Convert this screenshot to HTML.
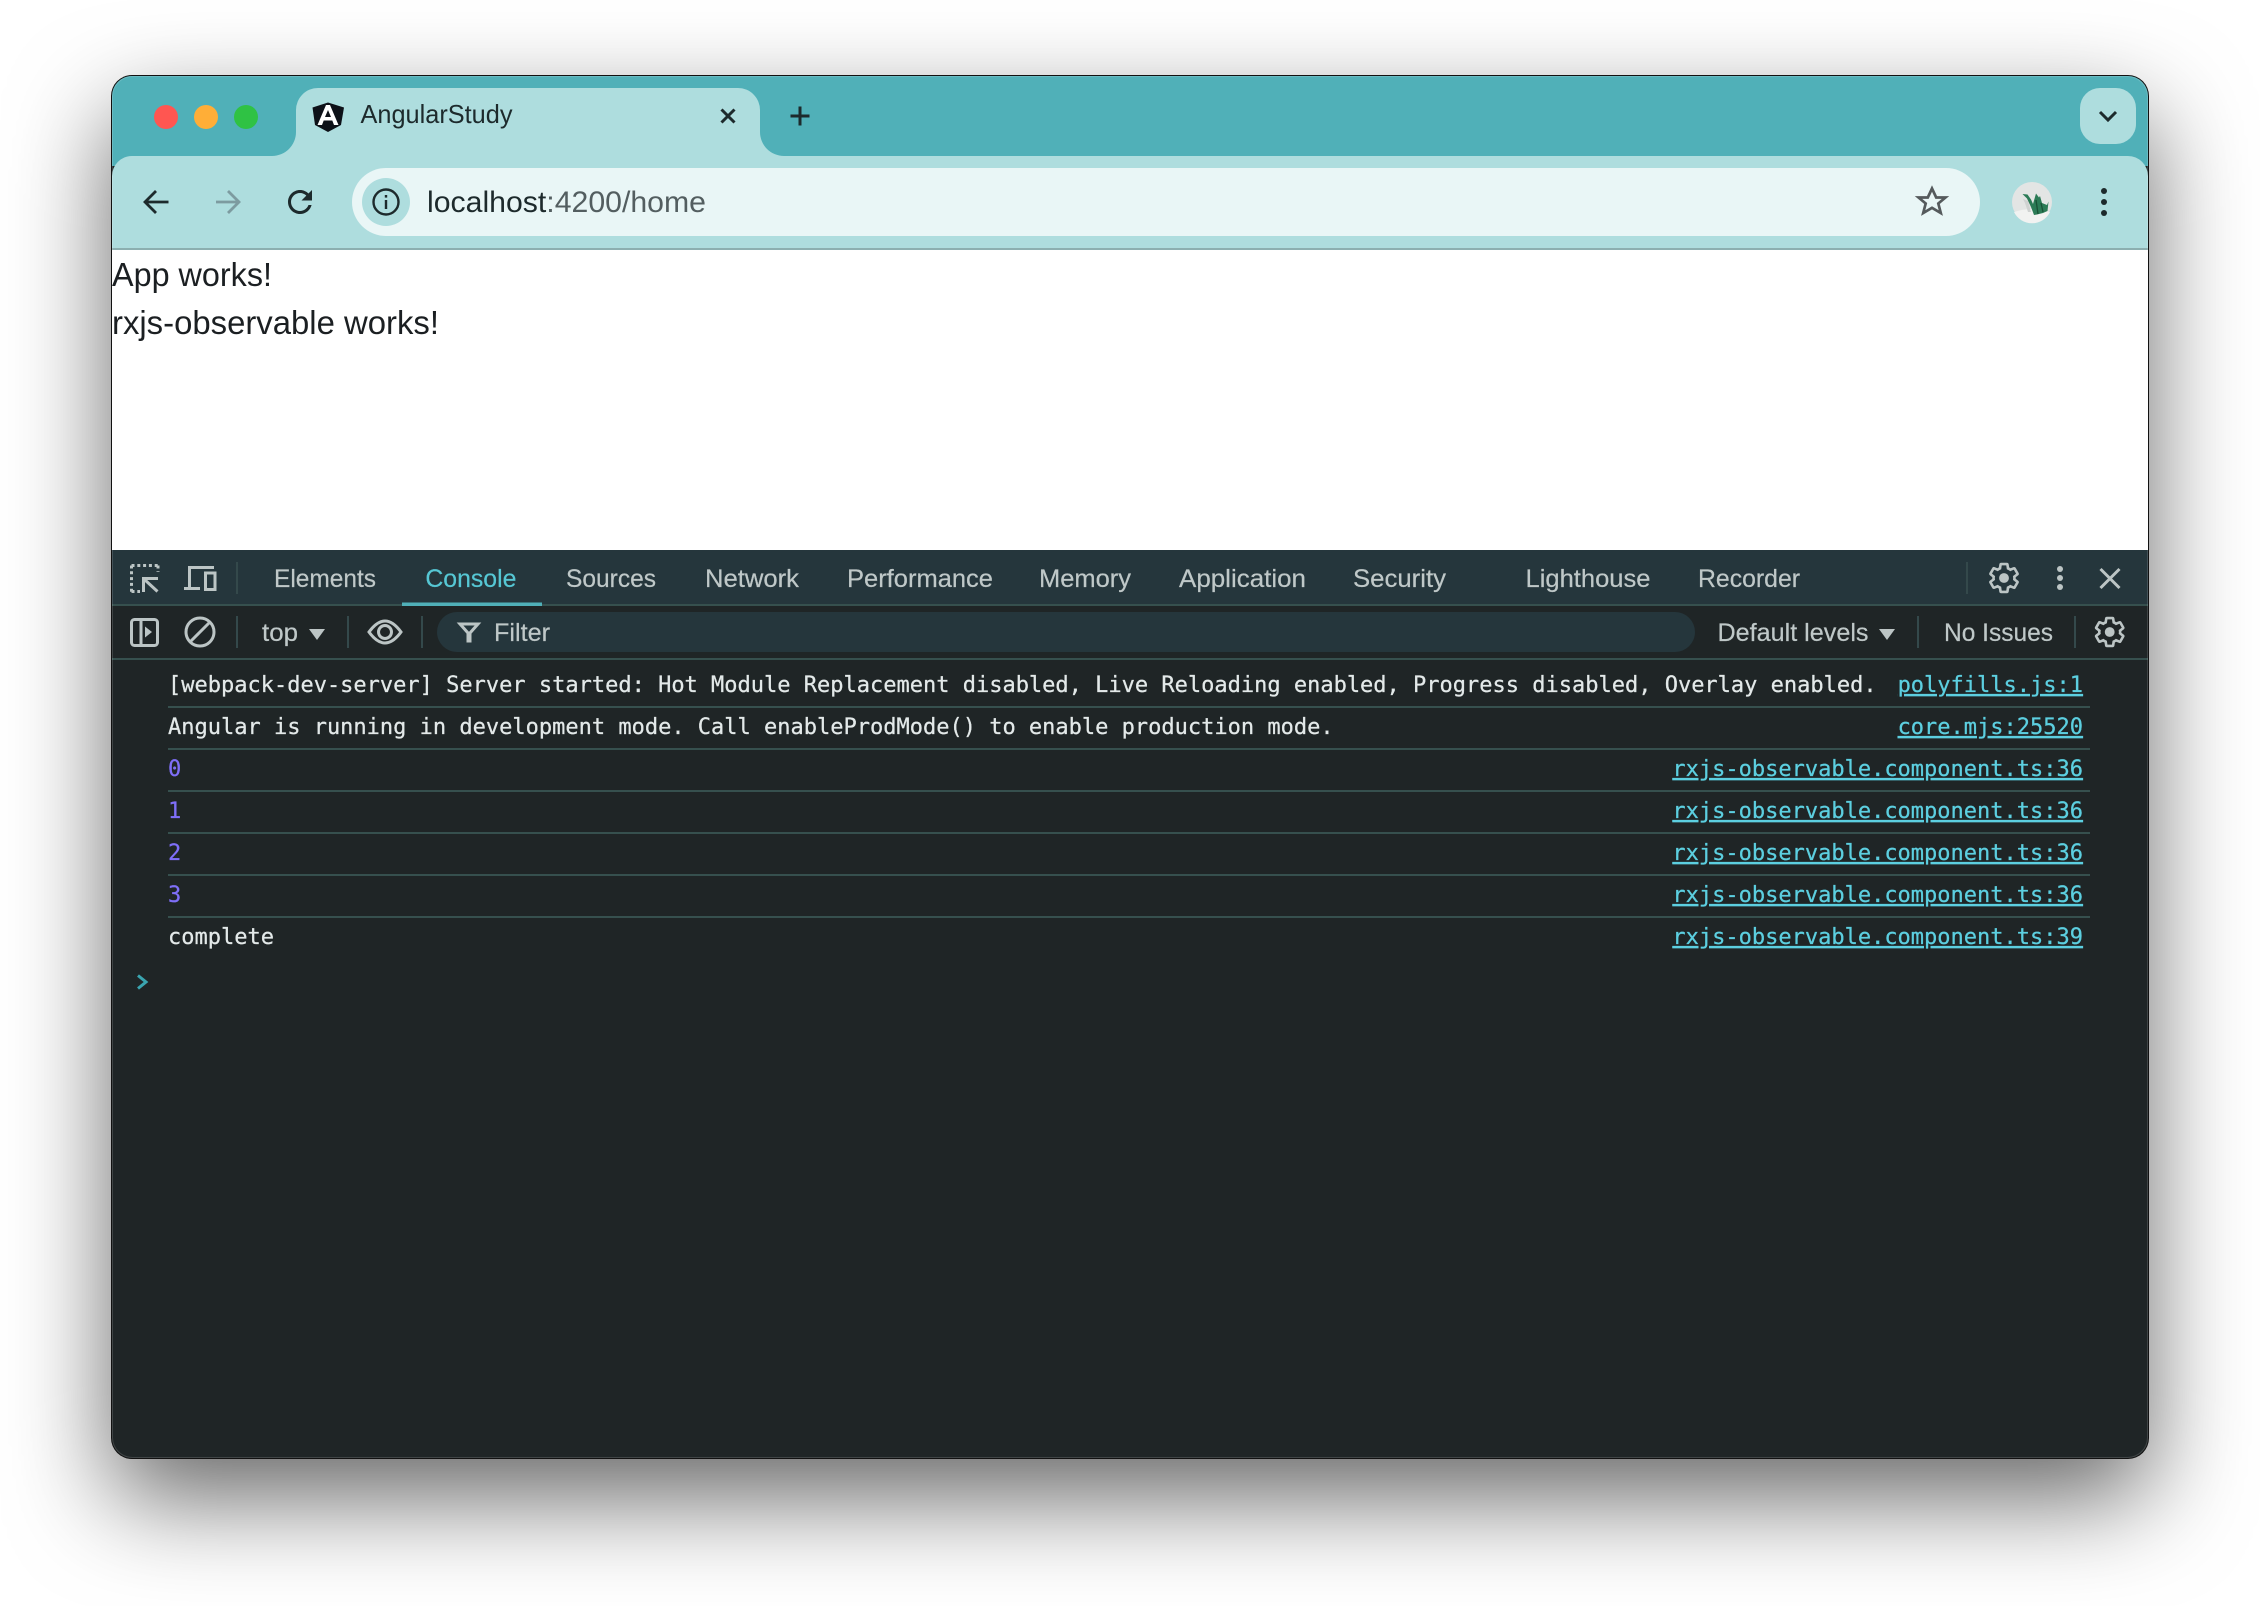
<!DOCTYPE html>
<html><head><meta charset="utf-8"><title>AngularStudy</title>
<style>
html,body{margin:0;padding:0;background:#fff;width:2260px;height:1606px;overflow:hidden}
#w{position:absolute;left:112px;top:76px;width:2036px;height:1382px;border-radius:20px;background:#1f2526;box-shadow:0 0 0 1px #111,0 40px 100px rgba(0,0,0,.6)}
svg{position:absolute;left:0;top:0}
.u{font-family:"Liberation Sans",sans-serif;font-size:25px;fill:#bfc8c8;stroke:#bfc8c8;stroke-width:.2}
.m{font-family:"DejaVu Sans Mono","Liberation Mono",monospace;font-size:22px;fill:#e3e9e9;stroke:#e3e9e9;stroke-width:.25}
.l{fill:#5ccfe0;stroke:#5ccfe0;text-decoration:underline;text-anchor:end}
.n{fill:#7f6ff8;stroke:#7f6ff8}
.ic{fill:none;stroke:#bcc5c5;stroke-width:3}
.sep{stroke:#34494b;stroke-width:2}
.row{fill:#36504e}
</style></head><body>
<div id="w"></div>
<svg width="2260" height="1606" viewBox="0 0 2260 1606" xmlns="http://www.w3.org/2000/svg">
<defs><clipPath id="c"><rect x="112" y="76" width="2036" height="1382" rx="20"/></clipPath></defs>
<g clip-path="url(#c)">
<!-- tab strip -->
<rect x="112" y="76" width="2036" height="90" fill="#50b0b8"/>
<!-- toolbar -->
<path d="M112 176A20 20 0 0 1 132 156H2128A20 20 0 0 1 2148 176V248H112Z" fill="#aeddde"/>
<rect x="112" y="248" width="2036" height="2" fill="#8cafb0"/>
<rect x="112" y="250" width="2036" height="300" fill="#fff"/>
<!-- tab -->
<path d="M272 156A24 24 0 0 0 296 132V110A22 22 0 0 1 318 88H738A22 22 0 0 1 760 110V132A24 24 0 0 0 784 156Z" fill="#aeddde"/>
<!-- devtools -->
<rect x="112" y="550" width="2036" height="54" fill="#25363c"/>
<rect x="112" y="604" width="2036" height="2" fill="#36504e"/>
<rect x="112" y="606" width="2036" height="52" fill="#1f2526"/>
<rect x="112" y="658" width="2036" height="2" fill="#36504e"/>
<rect x="112" y="660" width="2036" height="800" fill="#1f2526"/>
</g>
<rect x="112.500" y="76.500" width="2035" height="1381" rx="20" fill="none" stroke="#fff" stroke-opacity=".15"/>

<!-- traffic lights -->
<circle cx="166" cy="117" r="12" fill="#ff5651"/>
<circle cx="206" cy="117" r="12" fill="#ffae37"/>
<circle cx="246" cy="117" r="12" fill="#2fc244"/>

<!-- favicon -->
<path d="M328 102.500L344 107.500L341 125L328 132L315 125L312.500 107.500Z" fill="#0d1118"/>
<path d="M326 105H330L338.500 125H334L332.300 120.500H323.700L322 125H317.500ZM325 117H331L328 110Z" fill="#fff" fill-rule="evenodd"/>
<text x="360.500" y="123" font-family="'Liberation Sans',sans-serif" font-size="26" fill="#1d2a2c" textLength="152" lengthAdjust="spacingAndGlyphs">AngularStudy</text>
<path d="M721.500 109.500L734.500 122.500M734.500 109.500L721.500 122.500" stroke="#1d2a2c" stroke-width="3" fill="none"/>
<path d="M800 106.500V125.500M790.500 116H809.500" stroke="#1d2a2c" stroke-width="3" fill="none"/>

<!-- chevron button -->
<rect x="2080" y="88" width="56" height="56" rx="20" fill="#aeddde"/>
<path d="M2100 112L2108 120L2116 112" stroke="#1d2a2c" stroke-width="3" fill="none"/>

<!-- nav -->
<path d="M168.500 202H146M156 191L145 202L156 213" stroke="#1d2a2c" stroke-width="2.800" fill="none"/>
<path d="M216 202H238M228 191L239 202L228 213" stroke="#7d9ba0" stroke-width="2.800" fill="none"/>
<path transform="translate(282 184) scale(1.5)" d="M17.65 6.35C16.2 4.9 14.21 4 12 4c-4.42 0-7.99 3.58-7.99 8s3.57 8 7.990 8c3.730 0 6.840-2.550 7.730-6h-2.080c-.820 2.330-3.040 4-5.650 4-3.310 0-6-2.690-6-6s2.690-6 6-6c1.660 0 3.140.690 4.220 1.780L13 11h7V4l-2.350 2.350z" fill="#1d2a2c"/>

<!-- omnibox -->
<rect x="352" y="168" width="1628" height="68" rx="34" fill="#e9f6f6"/>
<circle cx="386" cy="202" r="24" fill="#aeddde"/>
<circle cx="386" cy="202" r="12.500" fill="none" stroke="#1d2a2c" stroke-width="2.400"/>
<rect x="384.800" y="200" width="2.400" height="9" fill="#1d2a2c"/>
<rect x="384.800" y="195" width="2.400" height="2.600" fill="#1d2a2c"/>
<text x="427" y="212" font-family="'Liberation Sans',sans-serif" font-size="29.500" fill="#1d2a2c" textLength="279" lengthAdjust="spacingAndGlyphs">localhost<tspan fill="#535e60">:4200/home</tspan></text>
<path d="M1932 188.500L1936.200 197.500H1945.500L1938.300 203.500L1940.800 213L1932 207.800L1923.200 213L1925.700 203.500L1918.500 197.500H1927.800Z" fill="none" stroke="#555a5c" stroke-width="2.700"/>

<!-- avatar -->
<circle cx="2032" cy="202" r="20" fill="#e3e5e4"/>
<path d="M2014 212Q2032 206 2050 212A20 20 0 0 1 2014 212Z" fill="#f1f2f1"/>
<path d="M2023 199L2025 203L2028 212H2031L2028 201Z" fill="#cfd2d1"/>
<path d="M2022.500 194L2027.500 194.500L2031 199.500L2033 204L2036 193.500L2039 197.500L2040 196L2042 203L2047 205L2048.500 201.500L2047.500 211L2043 213L2037 214.500L2034 215L2031 207L2027 198.500Z" fill="#2b7b56"/>
<path d="M2036 200L2038 214M2041 203L2043 212" stroke="#185236" stroke-width="1.300" fill="none"/>

<!-- menu dots -->
<circle cx="2104" cy="191" r="3" fill="#1d2a2c"/><circle cx="2104" cy="202" r="3" fill="#1d2a2c"/><circle cx="2104" cy="213" r="3" fill="#1d2a2c"/>

<!-- page text -->
<text x="112" y="286" font-family="'Liberation Sans',sans-serif" font-size="33" fill="#1b1f22" textLength="160" lengthAdjust="spacingAndGlyphs">App works!</text>
<text x="112" y="334" font-family="'Liberation Sans',sans-serif" font-size="33" fill="#1b1f22" textLength="327" lengthAdjust="spacingAndGlyphs">rxjs-observable works!</text>

<!-- devtools tab icons -->
<path d="M131.500 565.500H158M131.500 565.500V592M158 565.500V572M131.500 591.500H140" class="ic" stroke-dasharray="3 2.800"/>
<path d="M143.500 592V578.500H158M145 580L157.500 591.500" class="ic"/>
<path d="M184 588.500H200M189.500 590V567.500H214" class="ic"/>
<rect x="205.500" y="573" width="9.500" height="16.500" class="ic"/>
<line x1="237" y1="562" x2="237" y2="594" class="sep"/>

<text class="u" x="274" y="587" textLength="102" lengthAdjust="spacingAndGlyphs">Elements</text>
<text class="u" x="425.400" y="587" textLength="91" lengthAdjust="spacingAndGlyphs" style="fill:#56c7d4;stroke:#56c7d4">Console</text>
<rect x="402" y="602.500" width="140" height="3.500" fill="#50b0b8"/>
<text class="u" x="566" y="587" textLength="90" lengthAdjust="spacingAndGlyphs">Sources</text>
<text class="u" x="705" y="587" textLength="94" lengthAdjust="spacingAndGlyphs">Network</text>
<text class="u" x="847" y="587" textLength="146" lengthAdjust="spacingAndGlyphs">Performance</text>
<text class="u" x="1039" y="587" textLength="92" lengthAdjust="spacingAndGlyphs">Memory</text>
<text class="u" x="1179" y="587" textLength="127" lengthAdjust="spacingAndGlyphs">Application</text>
<text class="u" x="1353" y="587" textLength="93" lengthAdjust="spacingAndGlyphs">Security</text>
<text class="u" x="1525.500" y="587" textLength="125" lengthAdjust="spacingAndGlyphs">Lighthouse</text>
<text class="u" x="1698" y="587" textLength="102" lengthAdjust="spacingAndGlyphs">Recorder</text>
<line x1="1967" y1="562" x2="1967" y2="594" class="sep"/>

<!-- gear top -->
<g transform="translate(1986.600 560.600) scale(1.45)">
<path d="M19.14 12.94c.04-.3.06-.61.06-.94 0-.32-.02-.64-.07-.94l2.030-1.580c.18-.14.23-.41.12-.61l-1.920-3.320c-.12-.22-.37-.29-.59-.22l-2.390.96c-.5-.38-1.030-.7-1.620-.94l-.36-2.540c-.04-.24-.24-.41-.48-.41h-3.840c-.24 0-.43.17-.47.41l-.36 2.540c-.59.24-1.130.57-1.620.94l-2.390-.96c-.22-.08-.47 0-.59.22L2.740 8.870c-.12.21-.08.47.12.61l2.030 1.580c-.05.3-.09.63-.09.94s.02.64.07.94l-2.030 1.580c-.18.14-.23.41-.12.61l1.920 3.320c.12.22.37.29.59.22l2.390-.96c.5.38 1.030.7 1.620.94l.36 2.540c.05.24.24.41.48.41h3.840c.24 0 .44-.17.47-.41l.36-2.540c.59-.24 1.130-.56 1.620-.94l2.390.96c.22.08.47 0 .59-.22l1.920-3.320c.12-.22.07-.47-.12-.61l-2.010-1.580z" fill="none" stroke="#bcc5c5" stroke-width="1.800"/>
<circle cx="12" cy="12" r="3.400" fill="#bcc5c5"/>
</g>
<circle cx="2060" cy="569" r="3" fill="#bcc5c5"/><circle cx="2060" cy="578" r="3" fill="#bcc5c5"/><circle cx="2060" cy="587" r="3" fill="#bcc5c5"/>
<path d="M2100.500 569L2119.500 588M2119.500 569L2100.500 588" class="ic" stroke-width="2.400"/>

<!-- console toolbar -->
<rect x="131.500" y="619.500" width="26" height="26" rx="3" class="ic"/>
<line x1="141" y1="619" x2="141" y2="646" class="ic"/>
<path d="M145 626.500L152 632L145 637.500Z" fill="#bcc5c5"/>
<circle cx="200" cy="632" r="14" class="ic" stroke-width="2.600"/>
<line x1="190.500" y1="641.500" x2="209.500" y2="622.500" class="ic" stroke-width="2.600"/>
<line x1="237" y1="616" x2="237" y2="648" class="sep"/>
<text class="u" x="262" y="641" textLength="36" lengthAdjust="spacingAndGlyphs">top</text>
<path d="M309 629H325L317 640Z" fill="#bcc5c5"/>
<line x1="348" y1="616" x2="348" y2="648" class="sep"/>
<path d="M369 632Q385 610 401 632Q385 654 369 632Z" class="ic" stroke-width="2.800"/>
<circle cx="385" cy="632" r="6.500" class="ic" stroke-width="2.800"/>
<line x1="422" y1="616" x2="422" y2="648" class="sep"/>
<rect x="437" y="612" width="1258" height="40" rx="20" fill="#25363c"/>
<path d="M460 624H478L470 633V641H468V633Z" class="ic" stroke-width="2"/>
<text class="u" x="494" y="641" textLength="56" lengthAdjust="spacingAndGlyphs">Filter</text>
<text class="u" x="1717.500" y="641" textLength="151" lengthAdjust="spacingAndGlyphs">Default levels</text>
<path d="M1879 629H1895L1887 640Z" fill="#bcc5c5"/>
<line x1="1918" y1="616" x2="1918" y2="648" class="sep"/>
<text class="u" x="1944" y="641" textLength="109" lengthAdjust="spacingAndGlyphs">No Issues</text>
<line x1="2075" y1="616" x2="2075" y2="648" class="sep"/>
<g transform="translate(2092.300 614.600) scale(1.45)">
<path d="M19.14 12.94c.04-.3.06-.61.06-.94 0-.32-.02-.64-.07-.94l2.030-1.580c.18-.14.23-.41.12-.61l-1.920-3.320c-.12-.22-.37-.29-.59-.22l-2.390.96c-.5-.38-1.030-.7-1.620-.94l-.36-2.540c-.04-.24-.24-.41-.48-.41h-3.840c-.24 0-.43.17-.47.41l-.36 2.540c-.59.24-1.130.57-1.620.94l-2.390-.96c-.22-.08-.47 0-.59.22L2.740 8.870c-.12.21-.08.47.12.61l2.030 1.580c-.05.3-.09.63-.09.94s.02.64.07.94l-2.030 1.580c-.18.14-.23.41-.12.61l1.920 3.320c.12.22.37.29.59.22l2.390-.96c.5.38 1.030.7 1.620.94l.36 2.540c.05.24.24.41.48.41h3.840c.24 0 .44-.17.47-.41l.36-2.540c.59-.24 1.130-.56 1.620-.94l2.390.96c.22.08.47 0 .59-.22l1.920-3.320c.12-.22.07-.47-.12-.61l-2.010-1.580z" fill="none" stroke="#bcc5c5" stroke-width="1.800"/>
<circle cx="12" cy="12" r="3.400" fill="#bcc5c5"/>
</g>

<!-- console rows -->
<rect class="row" x="168" y="706" width="1922" height="2"/>
<rect class="row" x="168" y="748" width="1922" height="2"/>
<rect class="row" x="168" y="790" width="1922" height="2"/>
<rect class="row" x="168" y="832" width="1922" height="2"/>
<rect class="row" x="168" y="874" width="1922" height="2"/>
<rect class="row" x="168" y="916" width="1922" height="2"/>

<text class="m" x="168" y="692" xml:space="preserve">[webpack-dev-server] Server started: Hot Module Replacement disabled, Live Reloading enabled, Progress disabled, Overlay enabled.</text>
<text class="m l" x="2083" y="692">polyfills.js:1</text>
<text class="m" x="168" y="734">Angular is running in development mode. Call enableProdMode() to enable production mode.</text>
<text class="m l" x="2083" y="734">core.mjs:25520</text>
<text class="m n" x="168" y="776">0</text>
<text class="m l" x="2083" y="776">rxjs-observable.component.ts:36</text>
<text class="m n" x="168" y="818">1</text>
<text class="m l" x="2083" y="818">rxjs-observable.component.ts:36</text>
<text class="m n" x="168" y="860">2</text>
<text class="m l" x="2083" y="860">rxjs-observable.component.ts:36</text>
<text class="m n" x="168" y="902">3</text>
<text class="m l" x="2083" y="902">rxjs-observable.component.ts:36</text>
<text class="m" x="168" y="944">complete</text>
<text class="m l" x="2083" y="944">rxjs-observable.component.ts:39</text>
<path d="M138 975.500L146 982L138 988.500" fill="none" stroke="#3aa5b0" stroke-width="3"/>
</svg>
</body></html>
